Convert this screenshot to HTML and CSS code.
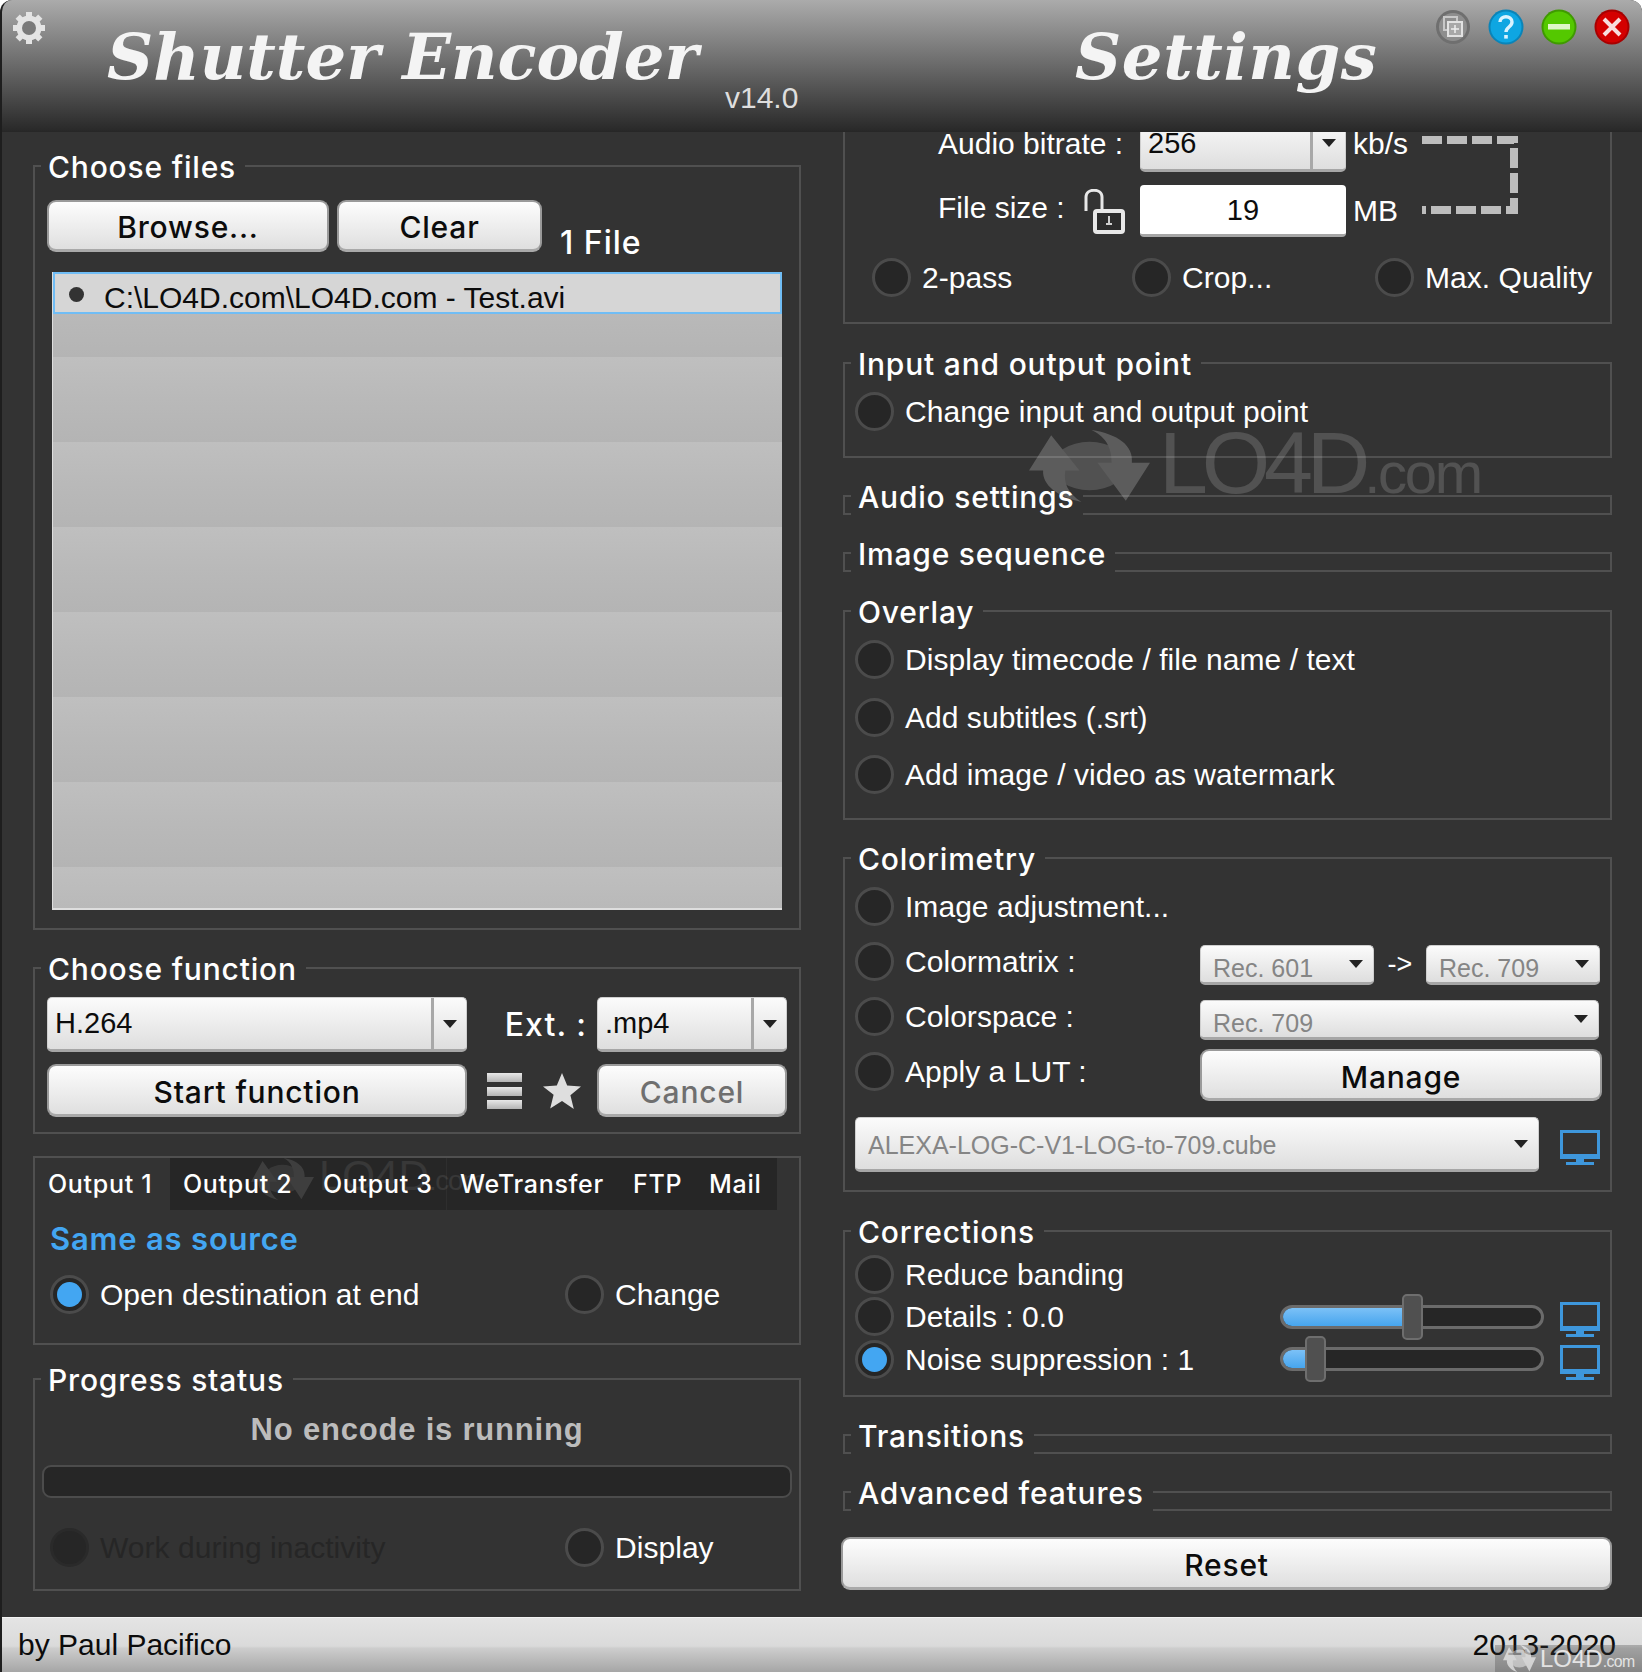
FILE: index.html
```html
<!DOCTYPE html>
<html lang="en">
<head>
<meta charset="utf-8">
<title>Shutter Encoder</title>
<link rel="stylesheet" href="styles.css">
</head>
<body>
<div class="app">
  <header class="titlebar">
    <svg class="gear" viewBox="0 0 32 32"><g fill="#e4e4e4"><rect x="13" y="0" width="6" height="32"/><rect x="0" y="13" width="32" height="6"/><rect x="13" y="0" width="6" height="32" transform="rotate(45 16 16)"/><rect x="13" y="0" width="6" height="32" transform="rotate(-45 16 16)"/></g><circle cx="16" cy="16" r="9.5" fill="none" stroke="#e4e4e4" stroke-width="6"/><circle cx="16" cy="16" r="7" fill="#7a7a7a"/></svg>
    <h1 class="logo logo-main">Shutter Encoder</h1>
    <span class="version">v14.0</span>
    <h2 class="logo logo-settings">Settings</h2>
    <div class="winbtns">
      <svg class="winbtn" viewBox="0 0 36 36"><circle cx="18" cy="18" r="17" fill="#6f6f6f"/><circle cx="18" cy="18" r="14" fill="#8e8e8e"/><rect x="9" y="8" width="13" height="13" fill="none" stroke="#c8c8c8" stroke-width="2"/><rect x="13" y="13" width="14" height="14" fill="#a8a8a8" stroke="#e2e2e2" stroke-width="2"/><path d="M20 16v8M16 20h8" stroke="#eee" stroke-width="1.5"/></svg>
      <svg class="winbtn" viewBox="0 0 36 36"><circle cx="18" cy="18" r="17.5" fill="#0a84b8"/><circle cx="18" cy="18" r="15.5" fill="#0ea6e2"/><path d="M12 13c0-7 12-7 12 0 0 5-6 5-6 10" fill="none" stroke="#d9f3ff" stroke-width="3.4"/><rect x="16.2" y="26" width="3.6" height="3.6" fill="#d9f3ff"/></svg>
      <svg class="winbtn" viewBox="0 0 36 36"><circle cx="18" cy="18" r="17.5" fill="#3f9a00"/><circle cx="18" cy="18" r="15.5" fill="#54c800"/><rect x="7" y="15" width="22" height="5.5" fill="#dff7c8"/></svg>
      <svg class="winbtn" viewBox="0 0 36 36"><circle cx="18" cy="18" r="17.5" fill="#a80000"/><circle cx="18" cy="18" r="15.5" fill="#d40000"/><path d="M10 10l16 16M26 10L10 26" stroke="#f7dede" stroke-width="4"/></svg>
    </div>
  </header>

  <main class="panes">
    <div class="col col-left">
      <section class="group g-files">
        <span class="legend">Choose files</span>
        <div class="file-actions">
          <button class="btn btn-browse">Browse...</button>
          <button class="btn btn-clear">Clear</button>
          <span class="file-count">1 File</span>
        </div>
        <ul class="filelist">
          <li class="file selected"><i class="dot"></i><span class="file-name">C:\LO4D.com\LO4D.com - Test.avi</span></li>
          <li class="file"></li><li class="file alt"></li><li class="file"></li><li class="file alt"></li><li class="file"></li><li class="file alt"></li><li class="file"></li><li class="file alt"></li><li class="file"></li><li class="file alt"></li><li class="file"></li><li class="file alt"></li><li class="file"></li><li class="file alt"></li>
        </ul>
      </section>

      <section class="group g-function">
        <span class="legend">Choose function</span>
        <div class="fn-grid">
          <div class="combo combo-split combo-lg"><span class="combo-text">H.264</span><span class="combo-btn"><i class="arrow"></i></span></div>
          <span class="ext-label">Ext. :</span>
          <div class="combo combo-split combo-lg"><span class="combo-text">.mp4</span><span class="combo-btn"><i class="arrow"></i></span></div>
          <button class="btn btn-fn">Start function</button>
          <div class="fn-icons">
            <svg class="ico-list" viewBox="0 0 35 36"><defs><linearGradient id="bar" x1="0" y1="0" x2="0" y2="1"><stop offset="0" stop-color="#e8e8e8"/><stop offset="1" stop-color="#b4b4b4"/></linearGradient></defs><g fill="url(#bar)"><rect y="0" width="35" height="9"/><rect y="14" width="35" height="9"/><rect y="27" width="35" height="9"/></g></svg>
            <svg class="ico-star" viewBox="0 0 38 36"><path d="M19 0l5.2 12.6 13.8.9-10.6 8.8 3.4 13.7L19 28l-11.800 7.500 3.400-13.700L0 13.500l13.800-.9z" fill="#dedede"/></svg>
          </div>
          <button class="btn btn-fn btn-disabled">Cancel</button>
        </div>
      </section>

      <section class="group g-output">
        <nav class="tabs">
          <span class="tab active t1">Output 1</span>
          <span class="tab t2">Output 2</span>
          <span class="tab t3">Output 3</span>
          <span class="tab t4">WeTransfer</span>
          <span class="tab t5">FTP</span>
          <span class="tab t6">Mail</span>
        </nav>
        <div class="dest">Same as source</div>
        <div class="opt-pair">
          <label class="opt w-left"><i class="radio on"></i>Open destination at end</label>
          <label class="opt"><i class="radio"></i>Change</label>
        </div>
      </section>

      <section class="group g-progress">
        <span class="legend">Progress status</span>
        <div class="encode-status">No encode is running</div>
        <div class="progress"></div>
        <div class="opt-pair opt-pair-progress">
          <label class="opt w-left disabled"><i class="radio"></i>Work during inactivity</label>
          <label class="opt"><i class="radio"></i>Display</label>
        </div>
      </section>
    </div>

    <div class="col col-right">
      <section class="group g-bitrate">
        <div class="rate-grid">
          <span class="rate-label">Audio bitrate :</span>
          <div class="combo combo-split combo-rate"><span class="combo-text">256</span><span class="combo-btn"><i class="arrow"></i></span></div>
          <span class="unit">kb/s</span>
          <svg class="link" viewBox="0 0 97 78"><path d="M0 4H92V74H0" fill="none" stroke="#bdbdbd" stroke-width="8" stroke-dasharray="20 5"/></svg>
          <span class="rate-label rate-label-lock"><span class="size-text">File size :</span>
            <svg class="lock" viewBox="0 0 42 45"><path d="M3 22V8c0-9 16-9 16 0v12" fill="none" stroke="#e8e8e8" stroke-width="3"/><rect x="12" y="22" width="28" height="21" rx="2" fill="#2c2c2c" stroke="#e8e8e8" stroke-width="4"/><path d="M26 27v9M23 35h6" stroke="#cfcfcf" stroke-width="2"/></svg>
          </span>
          <div class="field">19</div>
          <span class="unit">MB</span>
        </div>
        <div class="tri-opts">
          <label class="opt"><i class="radio"></i>2-pass</label>
          <label class="opt"><i class="radio"></i>Crop...</label>
          <label class="opt"><i class="radio"></i>Max. Quality</label>
        </div>
      </section>

      <section class="group g-inout">
        <span class="legend">Input and output point</span>
        <label class="opt"><i class="radio"></i>Change input and output point</label>
      </section>

      <section class="group g-closed"><span class="legend">Audio settings</span></section>
      <section class="group g-closed"><span class="legend">Image sequence</span></section>

      <section class="group g-overlay">
        <span class="legend">Overlay</span>
        <label class="opt"><i class="radio"></i>Display timecode / file name / text</label>
        <label class="opt"><i class="radio"></i>Add subtitles (.srt)</label>
        <label class="opt"><i class="radio"></i>Add image / video as watermark</label>
      </section>

      <section class="group g-color">
        <span class="legend">Colorimetry</span>
        <div class="c-row"><label class="opt"><i class="radio"></i>Image adjustment...</label></div>
        <div class="c-row">
          <label class="opt c-label"><i class="radio"></i>Colormatrix :</label>
          <div class="combo combo-sm combo-half"><span class="combo-text">Rec. 601</span><i class="arrow"></i></div>
          <span class="to">-&gt;</span>
          <div class="combo combo-sm combo-half"><span class="combo-text">Rec. 709</span><i class="arrow"></i></div>
        </div>
        <div class="c-row">
          <label class="opt c-label"><i class="radio"></i>Colorspace :</label>
          <div class="combo combo-sm combo-full"><span class="combo-text">Rec. 709</span><i class="arrow"></i></div>
        </div>
        <div class="c-row">
          <label class="opt c-label"><i class="radio"></i>Apply a LUT :</label>
          <button class="btn btn-manage">Manage</button>
        </div>
        <div class="lut-row">
          <div class="combo combo-lut"><span class="combo-text">ALEXA-LOG-C-V1-LOG-to-709.cube</span><i class="arrow"></i></div>
          <svg class="monitor" viewBox="0 0 40 36"><path d="M1.500 1.500h37v26h-37z" fill="none" stroke="#3e97dc" stroke-width="3"/><rect y="24" width="40" height="4" fill="#3e97dc"/><rect x="16" y="28" width="8" height="4" fill="#3e97dc"/><rect x="6" y="32" width="28" height="3" fill="#3e97dc"/></svg>
        </div>
      </section>

      <section class="group g-corr">
        <span class="legend">Corrections</span>
        <div class="r-row"><label class="opt"><i class="radio"></i>Reduce banding</label></div>
        <div class="r-row">
          <label class="opt r-label"><i class="radio"></i>Details : 0.0</label>
          <div class="slider"><span class="fill fill-a"></span><span class="thumb thumb-a"></span></div>
          <svg class="monitor" viewBox="0 0 40 36"><path d="M1.500 1.500h37v26h-37z" fill="none" stroke="#3e97dc" stroke-width="3"/><rect y="24" width="40" height="4" fill="#3e97dc"/><rect x="16" y="28" width="8" height="4" fill="#3e97dc"/><rect x="6" y="32" width="28" height="3" fill="#3e97dc"/></svg>
        </div>
        <div class="r-row">
          <label class="opt r-label"><i class="radio on"></i>Noise suppression : 1</label>
          <div class="slider"><span class="fill fill-b"></span><span class="thumb thumb-b"></span></div>
          <svg class="monitor" viewBox="0 0 40 36"><path d="M1.500 1.500h37v26h-37z" fill="none" stroke="#3e97dc" stroke-width="3"/><rect y="24" width="40" height="4" fill="#3e97dc"/><rect x="16" y="28" width="8" height="4" fill="#3e97dc"/><rect x="6" y="32" width="28" height="3" fill="#3e97dc"/></svg>
        </div>
      </section>

      <section class="group g-closed g-last"><span class="legend">Transitions</span></section>
      <section class="group g-closed"><span class="legend">Advanced features</span></section>

      <button class="btn btn-reset">Reset</button>
    </div>
  </main>

  <footer class="statusbar">
    <span>by Paul Pacifico</span>
    <span>2013-2020</span>
  </footer>

  <div class="wm wm-big">
    <svg class="wm-ico" viewBox="0 0 120 110" preserveAspectRatio="none"><circle cx="60" cy="55" r="37" fill="#fff" opacity=".75"/><path d="M22 8L0 62h14c-1 22 14 40 38 48-14-14-18-30-16-48h14zM62 0c26 6 42 24 40 50h18l-24 58-28-58h14C82 30 78 12 62 0z" fill="#fff"/></svg>
    <span class="wm-text">LO4D<small>.com</small></span>
  </div>
  <div class="wm wm-tab">
    <svg class="wm-ico" viewBox="0 0 120 110" preserveAspectRatio="none"><circle cx="60" cy="55" r="37" fill="#fff" opacity=".75"/><path d="M22 8L0 62h14c-1 22 14 40 38 48-14-14-18-30-16-48h14zM62 0c26 6 42 24 40 50h18l-24 58-28-58h14C82 30 78 12 62 0z" fill="#fff"/></svg>
    <span class="wm-text">LO4D<small>.com</small></span>
  </div>
  <div class="wm wm-foot">
    <svg class="wm-ico" viewBox="0 0 120 110" preserveAspectRatio="none"><circle cx="60" cy="55" r="37" fill="#fff" opacity=".75"/><path d="M22 8L0 62h14c-1 22 14 40 38 48-14-14-18-30-16-48h14zM62 0c26 6 42 24 40 50h18l-24 58-28-58h14C82 30 78 12 62 0z" fill="#fff"/></svg>
    <span class="wm-text">LO4D<small>.com</small></span>
  </div>
</div>
</body>
</html>
```

FILE: styles.css
```css
* { box-sizing: border-box; }
html, body { margin: 0; padding: 0; background: #fff; }
body { font-family: "Liberation Sans", Arial, sans-serif; }
ul { list-style: none; margin: 0; padding: 0; }
i { display: block; font-style: normal; }

.app {
  position: relative;
  width: 1642px;
  height: 1672px;
  display: flex;
  flex-direction: column;
  background: #333;
  border-left: 2px solid #1e1e1e;
  border-radius: 12px 12px 0 0;
  overflow: hidden;
}

/* Title bar */
.titlebar {
  position: relative;
  z-index: 2;
  flex: 0 0 132px;
  height: 132px;
  background: linear-gradient(#ababab, #2a2a2a 98%, #262626);
}
.gear { position: absolute; left: 11px; top: 12px; width: 32px; height: 32px; }
.logo {
  position: absolute;
  margin: 0;
  top: 15px;
  font-family: "DejaVu Serif", serif;
  font-weight: 700;
  font-style: italic;
  font-size: 64px;
  line-height: 84px;
  color: #f4f4f4;
  white-space: nowrap;
}
.logo-main { left: 105px; }
.logo-settings { left: 1073px; letter-spacing: .6px; }
.version { position: absolute; left: 723px; top: 80px; font-size: 30px; line-height: 36px; color: #dedede; }
.winbtns { position: absolute; right: 12px; top: 9px; display: flex; gap: 17px; }
.winbtn { width: 36px; height: 36px; display: block; }

/* Panes */
.panes { flex: 1; display: flex; min-height: 0; padding-left: 31px; }
.col { display: flex; flex-direction: column; flex: none; }
.col-left { width: 768px; padding-top: 33px; }
.col-right { width: 769px; margin-left: 42px; margin-top: -40px; }

.group { position: relative; flex: none; border: 2px solid #505050; }
.legend {
  position: absolute;
  top: -19px;
  left: 6px;
  height: 38px;
  padding: 0 9px 0 7px;
  background: #333;
  color: #fff;
  font-family: Inter, sans-serif;
  font-weight: 500;
  font-size: 30px;
  letter-spacing: .8px;
  line-height: 38px;
  white-space: nowrap;
}

/* Generic controls */
.btn {
  display: block;
  margin: 0;
  padding: 3px 0 0;
  border: 2px solid #8c8c8c;
  border-bottom-width: 3px;
  border-color: #9a9a9a #9a9a9a #a9a9a9;
  border-radius: 9px;
  background: linear-gradient(#fdfdfd, #dfdfdf);
  color: #0c0c0c;
  font-family: Inter, sans-serif;
  font-weight: 500;
  font-size: 30px;
  letter-spacing: .8px;
  line-height: 1;
  text-align: center;
}
.btn-disabled { color: #6f6f6f; }

.combo {
  display: flex;
  align-items: center;
  background: linear-gradient(#fbfbfb, #dedede);
  border: 1px solid #cfcfcf;
  border-bottom: 3px solid #a6a6a6;
  border-radius: 5px;
  color: #0c0c0c;
  font-size: 29px;
}
.combo-text { flex: 1; padding-left: 7px; white-space: nowrap; }
.combo-btn { flex: 0 0 35px; height: 100%; display: flex; align-items: center; justify-content: center; border-left: 3px solid #a8a8a8; }
.arrow { width: 0; height: 0; border-left: 7px solid transparent; border-right: 7px solid transparent; border-top: 8px solid #222; }
.combo-lg { height: 55px; }

.radio { flex: none; width: 39px; height: 39px; border-radius: 50%; border: 3px solid #4b4b4b; background: #262626; position: relative; margin-right: 11px; }
.radio.on::after { content: ""; position: absolute; inset: 4px; border-radius: 50%; background: #43a6f2; }
.opt { display: flex; align-items: center; color: #fff; font-size: 30px; letter-spacing: .04px; line-height: 39px; white-space: nowrap; }
.opt.disabled { color: #262626; }
.opt.disabled .radio { background: #262626; border-color: #2a2a2a; }

/* Choose files */
.g-files { height: 765px; padding: 33px 0 0 12px; }
.file-actions { display: flex; height: 52px; }
.btn-browse { width: 282px; }
.btn-clear { width: 205px; margin-left: 8px; }
.file-count { align-self: flex-end; margin: 0 0 -9px 18px; color: #fff; font-family: Inter, sans-serif; font-weight: 500; font-size: 32px; letter-spacing: 1px; line-height: 36px; white-space: nowrap; }
.filelist { margin: 20px 0 0 5px; width: 730px; height: 638px; background: #bbb; overflow: hidden; border-bottom: 2px solid #dedede; border-left: 1px solid #dedede; }
.file { height: 42.500px; background: linear-gradient(#b9b9b9, #b4b4b4); }
.file.alt { background: linear-gradient(#bfbfbf, #b9b9b9); }
.file.selected { display: flex; align-items: center; height: 42px; background: #d6d6d6; border: 2px solid #70bdf5; color: #0c0c0c; font-size: 30px; padding-left: 14px; white-space: nowrap; }
.file-name { padding-top: 9px; margin-left: -2px; }
.dot { width: 15px; height: 15px; margin-top: 2px; border-radius: 50%; background: #333; margin-right: 22px; }

/* Choose function */
.g-function { height: 167px; margin-top: 37px; padding: 28px 0 0 12px; }
.fn-grid { display: grid; grid-template-columns: 420px 130px 190px; grid-template-rows: 55px 53px; row-gap: 12px; }
.ext-label { align-self: center; justify-self: end; margin-right: 10px; color: #fff; font-family: Inter, sans-serif; font-weight: 500; font-size: 32px; letter-spacing: 1px; white-space: nowrap; }
.fn-icons { display: flex; align-items: center; padding-left: 20px; gap: 21px; }
.ico-list { width: 35px; height: 36px; }
.ico-star { width: 38px; height: 36px; }

/* Output */
.g-output { height: 189px; margin-top: 22px; }
.tabs { display: flex; height: 52px; align-items: center; color: #fff; font-family: Inter, sans-serif; font-weight: 500; font-size: 25px; letter-spacing: .7px; }
.tab { display: flex; align-items: center; height: 52px; padding-left: 13px; background: #262626; white-space: nowrap; }
.tab.active { background: #333; }
.t1 { width: 135px; }
.t2 { width: 140px; }
.t3 { width: 137px; border-right: 1px solid #2e2e2e; }
.t4 { width: 173px; }
.t5 { width: 76px; }
.t6 { width: 81px; }
.dest { margin: 10px 0 0 15px; color: #43a6f2; font-family: Inter, sans-serif; font-weight: 600; font-size: 31px; letter-spacing: .8px; line-height: 38px; }
.opt-pair { display: flex; margin: 17px 0 0 15px; }
.w-left { width: 515px; }

/* Progress */
.g-progress { height: 213px; margin-top: 33px; }
.encode-status { margin-top: 31px; text-align: center; color: #bcbcbc; font-weight: 700; font-size: 31px; letter-spacing: .8px; line-height: 38px; }
.progress { margin: 16px 0 0 7px; width: 750px; height: 33px; background: #262626; border: 2px solid #4c4c4c; border-radius: 9px; }
.opt-pair-progress { margin-top: 30px; }

/* Right: bitrate */
.g-bitrate { height: 232px; }
.rate-grid { display: grid; padding-top: 22px; grid-template-columns: 295px 206px 76px 97px; grid-template-rows: 56px 52px; row-gap: 13px; }
.rate-label { display: flex; align-items: center; justify-content: space-between; padding: 0 15px 0 93px; color: #fff; font-size: 30px; white-space: nowrap; }
.rate-label-lock { grid-row: 2; grid-column: 1; }
.size-text { margin-bottom: 6px; }
.combo-rate { height: 56px; }
.unit { padding-left: 7px; align-self: center; color: #fff; font-size: 30px; }
.link { grid-column: 4; grid-row: 1 / span 2; width: 97px; height: 78px; margin-top: 20px; }
.lock { width: 42px; height: 45px; }
.field { grid-row: 2; grid-column: 2; background: #fff; border-bottom: 3px solid #a6a6a6; border-radius: 4px; text-align: center; color: #0c0c0c; font-size: 29px; line-height: 50px; }
.tri-opts { display: grid; grid-template-columns: 260px 243px 1fr; margin: 21px 0 0 27px; }

.g-inout { height: 96px; margin-top: 38px; padding: 28px 0 0 10px; }
.g-closed { height: 20px; margin-top: 37px; }
.g-overlay { height: 210px; margin-top: 38px; padding: 19px 0 0 10px; }
.g-overlay .opt { height: 57.500px; }

.g-color { height: 335px; margin-top: 37px; padding: 20px 0 0 10px; }
.c-row { display: flex; align-items: center; height: 55px; }
.c-label { width: 345px; }
.combo-sm { margin-top: 6px; height: 40px; padding-right: 10px; color: #858585; font-size: 25px; }
.combo-sm .combo-text { padding-left: 12px; padding-top: 8px; line-height: 30px; overflow: hidden; }
.combo-half { width: 174px; }
.combo-full { width: 399px; }
.to { width: 52px; margin-top: 6px; text-align: center; color: #fff; font-size: 27px; }
.btn-manage { width: 402px; height: 52px; margin-top: 6px; padding-top: 6px; }
.lut-row { display: flex; align-items: center; margin-top: 18px; }
.combo-lut { width: 684px; height: 55px; padding-right: 10px; color: #858585; font-size: 25px; }
.combo-lut .combo-text { padding-left: 12px; padding-top: 3px; }
.monitor { width: 40px; height: 36px; flex: none; margin-left: 21px; margin-top: 7px; }

.g-corr { height: 167px; margin-top: 38px; padding: 21px 10px 0 10px; }
.r-row { display: flex; align-items: center; height: 42.500px; }
.r-label { width: 425px; }
.slider { position: relative; width: 264px; height: 24px; border: 3px solid #6b6b6b; border-radius: 12px; background: #262626; }
.slider + .monitor { margin-left: 16px; }
.fill { display: block; height: 100%; border-radius: 9px 0 0 9px; background: linear-gradient(#7cc1f7, #46a5ee); }
.fill-a { width: 122px; }
.fill-b { width: 24px; }
.thumb { position: absolute; top: -14px; width: 21px; height: 46px; border: 2px solid #6e6e6e; border-radius: 5px; background: #505050; }
.thumb-a { left: 119px; }
.thumb-b { left: 22px; }

.btn-reset { width: 771px; height: 53px; margin: 26px 0 0 -2px; }

/* Status bar */
.statusbar {
  flex: 0 0 55px;
  display: flex;
  justify-content: space-between;
  align-items: center;
  padding: 0 26px 0 16px;
  background: linear-gradient(#e4e4e4, #dadada 52%, #cdcdcd 56%, #a6a6a6);
  border-top: 1px solid #f2f2f2;
  color: #0c0c0c;
  font-size: 30px;
}

/* Watermarks */
.wm { position: absolute; z-index: 3; display: flex; align-items: center; pointer-events: none; }
.wm-ico { display: block; opacity: .2; }
.wm-text { color: #fff; opacity: .15; font-family: "Liberation Sans", sans-serif; white-space: nowrap; }
.wm-text small { font-size: 66%; letter-spacing: -.04em; }
.wm-big { left: 1027px; top: 423px; }
.wm-big .wm-ico { width: 121px; height: 72px; margin-right: 9px; }
.wm-big .wm-text { font-size: 88px; letter-spacing: -.07em; line-height: 72px; padding-top: 4px; }
.wm-tab { left: 249px; top: 1155px; opacity: .55; }
.wm-tab .wm-ico { width: 63px; height: 42px; margin-right: 5px; }
.wm-tab .wm-text { font-size: 42px; line-height: 42px; }
.wm-foot { right: 0; bottom: 0; width: 147px; height: 27px; background: rgba(60,60,60,.3); padding-left: 8px; }
.wm-foot .wm-ico { width: 33px; height: 27px; margin-right: 4px; opacity: .6; }
.wm-foot .wm-text { font-size: 24px; opacity: .75; }
```
